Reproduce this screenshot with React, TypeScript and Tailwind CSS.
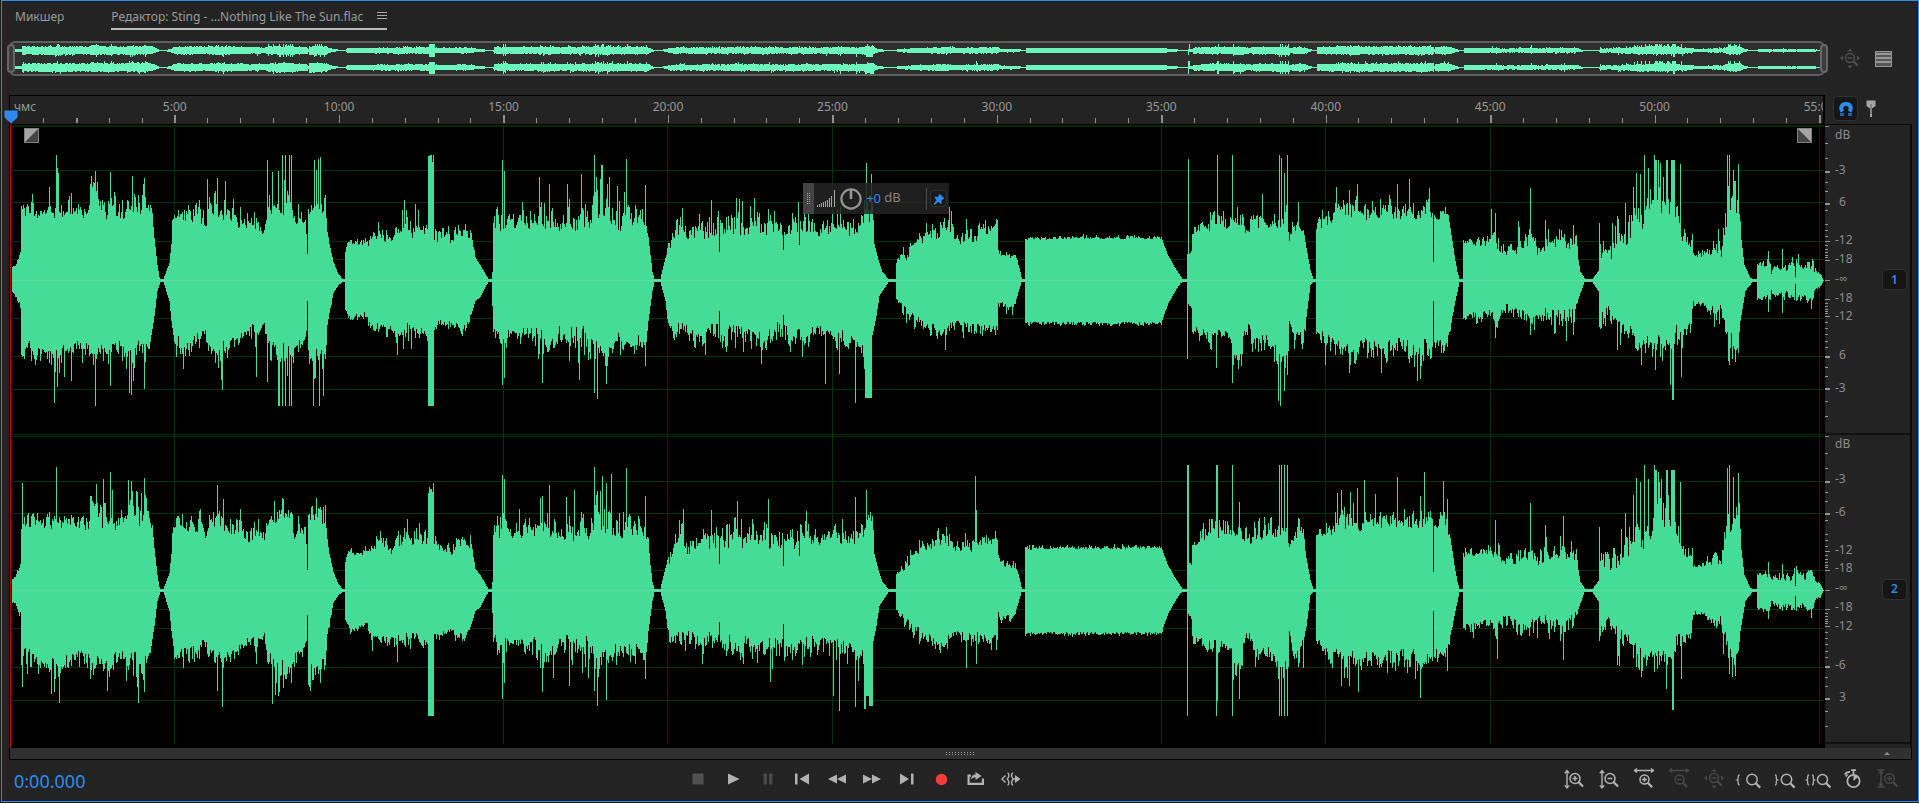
import React from 'react';

type Point = [number, number, number?];
type Spike = [number, number, number?];

/* Envelope points: x, steady level, peak level. */
const UPPER: Point[] = [
  [11, 9, 12], [14, 12, 16], [17, 16, 21], [20, 23, 30], [21, 62, 84], [26, 60, 76], [33, 62, 86], [45, 62, 72], [49, 62, 88],
  [54, 64, 88], [60, 60, 78], [71, 60, 87], [85, 60, 73], [89, 62, 80], [90, 86, 108], [97, 84, 106], [98, 62, 90], [106, 62, 96], [118, 58, 88],
  [124, 62, 80], [127, 72, 104], [135, 66, 98], [142, 65, 97], [147, 72, 96], [149, 68, 80], [152, 60, 70], [154, 42], [157, 15], [159, 3],
  [160, 1], [163, 1], [165, 6], [169, 17], [171, 36], [172, 56, 62], [176, 60, 80], [190, 60, 80], [200, 56, 82], [205, 50, 58],
  [208, 62, 86], [217, 64, 96], [225, 60, 90], [230, 55, 76], [240, 51, 78], [250, 49, 68], [257, 53, 70], [264, 44, 56], [266, 58, 74],
  [273, 66, 92], [282, 66, 92], [291, 66, 94], [293, 52, 70], [300, 58, 78], [305, 57, 72], [306, 46], [307, 26], [308, 66, 76], [314, 68, 90],
  [325, 66, 86], [327, 48, 52], [329, 36], [333, 18], [338, 6], [342, 1], [344, 1], [345, 28], [347, 35, 43], [368, 35, 44], [372, 40, 56],
  [378, 42, 64], [392, 36, 50], [398, 45, 60], [404, 46, 72], [412, 42, 60], [417, 45, 70], [427, 46, 60], [435, 40, 66], [437, 38, 50],
  [445, 38, 55], [452, 35, 46], [458, 44, 60], [470, 43, 57], [472, 38, 42], [475, 20, 24], [480, 15], [485, 6], [488, 1], [491, 1],
  [492, 8], [493, 50, 60], [497, 50, 92], [502, 52, 100], [506, 54, 72], [520, 52, 78], [535, 52, 68], [540, 52, 96], [550, 52, 90], [560, 49, 58],
  [567, 52, 92], [578, 49, 64], [582, 50, 96], [590, 52, 72], [594, 58, 104], [602, 62, 104], [612, 52, 94], [618, 50, 84], [627, 55, 90],
  [635, 58, 90], [640, 54, 74], [645, 48, 60], [648, 42, 50], [650, 25], [652, 8], [654, 1], [660, 1], [662, 10], [665, 22], [668, 25, 50],
  [675, 42, 62], [683, 45, 72], [688, 36, 52], [695, 42, 65], [708, 42, 65], [716, 43, 76], [727, 42, 72], [739, 44, 80], [745, 43, 62],
  [754, 48, 78], [765, 44, 74], [778, 42, 72], [785, 42, 60], [795, 43, 72], [803, 50, 80], [820, 42, 60], [832, 50, 76], [850, 45, 68],
  [860, 49, 68], [866, 54, 90], [872, 60, 90], [873, 60], [874, 36], [878, 20], [882, 8], [888, 1], [895, 1], [896, 15, 20], [902, 20, 33],
  [906, 18, 42], [912, 32, 40], [920, 37, 52], [930, 41, 55], [942, 44, 62], [950, 46, 68], [957, 36, 48], [967, 38, 58], [978, 40, 56],
  [984, 45, 64], [990, 45, 60], [997, 50, 62], [998, 25, 35], [1008, 22, 29], [1015, 22, 32], [1019, 12], [1021, 3], [1022, 1], [1024, 1], [1025, 40, 45],
  [1060, 41, 45], [1161, 41, 45], [1163, 37], [1167, 26], [1173, 15], [1180, 4], [1182, 1], [1186, 1], [1187, 26], [1191, 25, 30], [1192, 42, 50],
  [1200, 50, 66], [1210, 50, 76], [1230, 52, 70], [1240, 52, 75], [1247, 40, 68], [1252, 50, 68], [1262, 52, 80], [1270, 52, 78], [1278, 52, 68],
  [1287, 56, 72], [1289, 38, 44], [1292, 50, 60], [1298, 50, 76], [1303, 50, 62], [1306, 32], [1310, 10], [1313, 1], [1315, 1], [1316, 50, 62],
  [1323, 55, 75], [1332, 55, 68], [1336, 62, 88], [1356, 64, 88], [1360, 56, 72], [1368, 60, 82], [1378, 62, 88], [1390, 64, 85], [1400, 60, 78],
  [1410, 62, 86], [1425, 64, 86], [1432, 60, 84], [1433, 18], [1434, 60, 70], [1440, 60, 80], [1446, 60, 84], [1450, 52], [1454, 25],
  [1457, 8], [1459, 1], [1462, 1], [1463, 33, 42], [1480, 34, 46], [1492, 33, 48], [1497, 30, 52], [1505, 25, 32], [1507, 26, 44], [1515, 24, 36],
  [1518, 30, 52], [1530, 28, 54], [1538, 24, 34], [1545, 30, 58], [1552, 33, 48], [1560, 34, 54], [1572, 28, 44], [1576, 33, 50],
  [1578, 20], [1580, 8], [1585, 1], [1592, 1], [1595, 5], [1598, 9], [1599, 22, 54], [1607, 20, 52], [1615, 22, 48], [1620, 26, 62],
  [1628, 34, 74], [1634, 46, 84], [1645, 44, 98], [1655, 62, 116], [1665, 66, 116], [1676, 46, 88], [1682, 36, 55], [1692, 33, 60], [1693, 22, 28],
  [1705, 24, 32], [1715, 26, 46], [1722, 25, 58], [1727, 46, 96], [1731, 50, 88], [1739, 66, 90], [1741, 40], [1744, 15], [1750, 2], [1752, 1],
  [1756, 1], [1757, 14, 21], [1770, 12, 21], [1771, 6, 12], [1773, 12, 17], [1784, 9, 19], [1794, 10, 24], [1795, 3, 5], [1796, 14, 25], [1802, 10, 20],
  [1812, 12, 24], [1816, 6, 12], [1820, 6, 8], [1823, 0],
];

const LOWER: Point[] = [
  [11, 9, 12], [14, 11, 16], [20, 20, 28], [21, 55, 92], [30, 60, 88], [45, 70, 78], [54, 65, 108], [62, 64, 92], [78, 58, 75],
  [90, 65, 96], [100, 65, 85], [110, 65, 96], [120, 60, 72], [130, 60, 102], [145, 64, 102], [150, 60, 66], [154, 35], [157, 10], [160, 1],
  [163, 1], [169, 20], [171, 40], [174, 55, 70], [183, 58, 84], [197, 52, 72], [205, 45, 60], [208, 58, 74], [218, 62, 94], [228, 60, 78],
  [240, 52, 65], [253, 42, 60], [256, 50, 74], [264, 42], [267, 58, 92], [277, 66, 106], [292, 62, 96], [300, 60, 80], [306, 50], [307, 20],
  [308, 65, 96], [312, 72, 102], [325, 66, 88], [327, 38, 52], [333, 12], [338, 4], [342, 1], [344, 1], [345, 29], [350, 35, 45], [367, 30, 40],
  [372, 42, 58], [385, 45, 56], [398, 44, 68], [415, 42, 62], [427, 50, 62], [435, 40, 50], [450, 38, 48], [465, 44, 60], [472, 30], [475, 20],
  [480, 16], [485, 6], [488, 1], [491, 1], [493, 45, 60], [503, 45, 86], [510, 50, 58], [528, 45, 66], [540, 50, 94], [552, 52, 90], [560, 45, 58],
  [570, 46, 86], [582, 43, 86], [594, 56, 98], [604, 58, 94], [615, 55, 82], [625, 52, 76], [640, 55, 80], [646, 60, 72], [648, 40],
  [652, 10], [654, 1], [660, 1], [665, 20], [669, 45, 60], [690, 40, 68], [701, 44, 72], [716, 42, 60], [722, 46, 72], [735, 44, 74], [755, 50, 76],
  [770, 48, 74], [778, 42, 60], [785, 44, 70], [803, 48, 74], [825, 45, 62], [832, 49, 74], [850, 50, 68], [862, 60, 75], [864, 75, 90],
  [873, 50], [876, 35], [879, 15], [888, 1], [895, 1], [896, 18, 20], [905, 25, 40], [920, 38, 55], [930, 43, 60], [945, 46, 66], [957, 38, 44],
  [965, 43, 60], [980, 42, 60], [997, 44, 55], [998, 20, 30], [1013, 25, 35], [1019, 8], [1021, 1], [1024, 1], [1025, 41, 45], [1161, 41, 45],
  [1163, 36], [1168, 22], [1175, 10], [1180, 2], [1182, 1], [1186, 1], [1187, 22], [1191, 26, 30], [1192, 45, 60], [1205, 50, 66], [1216, 50, 72],
  [1225, 50, 60], [1231, 56, 66], [1232, 72, 96], [1242, 68, 92], [1243, 48, 58], [1249, 38, 50], [1252, 52, 72], [1270, 56, 76], [1278, 68, 90],
  [1288, 66, 88], [1289, 40], [1293, 50, 70], [1303, 50, 74], [1307, 28], [1310, 4], [1313, 1], [1315, 1], [1316, 48, 60], [1330, 56, 74],
  [1345, 62, 90], [1360, 58, 82], [1380, 62, 90], [1400, 58, 82], [1418, 60, 94], [1432, 60, 80], [1433, 20], [1434, 58, 72], [1447, 58, 72],
  [1454, 25], [1459, 1], [1462, 1], [1463, 33, 42], [1475, 32, 45], [1490, 28, 40], [1496, 35, 52], [1505, 22, 35], [1520, 30, 45], [1530, 28, 54],
  [1545, 25, 45], [1560, 30, 52], [1572, 25, 50], [1578, 18], [1584, 1], [1592, 1], [1598, 10], [1599, 30, 52], [1610, 26, 45], [1618, 36, 66],
  [1630, 46, 60], [1637, 56, 78], [1645, 54, 82], [1660, 55, 82], [1672, 62, 75], [1676, 45, 65], [1690, 40, 55], [1693, 20, 28], [1705, 22, 27],
  [1712, 26, 50], [1720, 25, 40], [1727, 50, 84], [1738, 60, 80], [1740, 40], [1745, 10], [1752, 1], [1756, 1], [1757, 16, 21], [1770, 14, 22],
  [1771, 8, 12], [1773, 12, 18], [1784, 10, 22], [1794, 14, 26], [1795, 3, 5], [1796, 15, 26], [1802, 12, 20], [1812, 18, 26], [1815, 7, 12], [1820, 4, 8], [1823, 0],
];

/* Single columns that rise over the envelope: x, level, width. */
const UP_1: Spike[] = [
  [49, 93], [56, 125], [57, 112], [58, 107], [71, 87], [95, 109], [110, 108], [132, 104], [143, 96], [207, 101], [217, 102], [225, 99],
  [267, 120], [272, 108], [278, 109], [282, 125], [285, 125], [289, 125], [291, 125], [314, 120], [316, 110], [318, 121], [320, 123],
  [307, 26, 1], [404, 80], [415, 76], [428, 124, 2], [430, 125, 2], [432, 118], [433, 125], [502, 120], [504, 109], [539, 103], [549, 96], [567, 96],
  [581, 106], [594, 125], [596, 103], [601, 115, 2], [609, 103], [617, 94], [626, 121], [645, 95, 1], [711, 80], [719, 28], [739, 81], [754, 82], [783, 30], [799, 35],
  [866, 117], [871, 106], [951, 69], [1188, 121], [1217, 125], [1232, 125], [1262, 86], [1279, 125], [1281, 122], [1284, 107], [1287, 125],
  [1298, 78], [1357, 96], [1397, 96], [1409, 101], [1429, 92], [1491, 71], [1495, 67], [1518, 59], [1530, 92], [1545, 60], [1573, 55], [1599, 57], [1617, 64],
  [1625, 77], [1633, 93], [1636, 107], [1640, 106], [1644, 125], [1648, 112], [1654, 125], [1655, 120, 2], [1658, 120], [1660, 117], [1663, 103],
  [1666, 120, 2], [1671, 120, 4], [1680, 116], [1727, 125], [1729, 125], [1733, 110], [1734, 99, 2], [1738, 116], [1768, 29], [1782, 31], [1792, 23], [1798, 26],
];
const DOWN_1: Spike[] = [
  [54, 122], [57, 106], [71, 100], [95, 125], [110, 105], [129, 112], [131, 114], [144, 108], [183, 88], [222, 109], [256, 96], [267, 101],
  [278, 125, 2], [282, 125], [285, 125], [289, 125], [291, 125], [313, 125], [319, 125], [323, 115], [397, 74], [403, 68], [428, 125, 6],
  [502, 104], [504, 97], [542, 102], [594, 112], [597, 118], [606, 103], [645, 85], [719, 30], [783, 34], [825, 103], [839, 93], [855, 122], [865, 117, 7],
  [945, 69], [1187, 78], [1216, 87], [1232, 102], [1241, 85], [1278, 120], [1280, 125], [1284, 110], [1287, 94], [1325, 84], [1349, 92],
  [1381, 92], [1417, 100], [1420, 98], [1495, 57], [1530, 54], [1573, 54], [1617, 69], [1641, 84], [1655, 89], [1670, 104], [1672, 119, 2], [1681, 96],
  [1729, 84], [1735, 81], [1768, 31], [1782, 32], [1811, 28],
];
const UP_2: Spike[] = [
  [22, 107], [56, 123], [103, 111], [110, 118], [112, 100], [128, 110], [137, 98], [144, 112], [217, 105], [223, 91], [282, 92], [311, 83],
  [307, 20], [428, 97], [429, 103], [430, 101, 2], [432, 98], [433, 107], [502, 115], [504, 111], [542, 94], [549, 105], [566, 93], [574, 100],
  [594, 123], [597, 99], [602, 114], [606, 107], [611, 116], [626, 122], [645, 94], [683, 81], [711, 80], [719, 26], [737, 89], [768, 91], [783, 24],
  [799, 34], [855, 93], [866, 100], [870, 78], [975, 114], [976, 80], [1187, 125, 2], [1216, 125, 2], [1232, 125], [1239, 88], [1279, 125],
  [1281, 125], [1284, 125], [1287, 125], [1337, 97], [1341, 100], [1350, 98], [1357, 102], [1364, 110], [1375, 96], [1397, 113], [1420, 94], [1424, 118],
  [1443, 109], [1447, 91], [1495, 70], [1530, 87], [1545, 65], [1563, 74], [1599, 63], [1625, 77], [1633, 95], [1636, 112], [1640, 108], [1644, 125],
  [1648, 111], [1654, 125], [1655, 120, 2], [1658, 118], [1666, 120, 2], [1671, 120, 4], [1680, 108], [1727, 122], [1729, 125], [1733, 113], [1738, 117], [1768, 28], [1782, 26],
];
const DOWN_2: Spike[] = [
  [22, 96], [54, 101], [59, 112], [107, 100], [138, 112], [217, 100], [222, 116], [272, 113], [275, 104], [279, 101], [310, 100], [320, 92],
  [307, 24], [372, 60], [397, 71], [428, 125, 6], [502, 108], [504, 92], [542, 101], [569, 95], [594, 100], [597, 115], [606, 109], [645, 88], [719, 31],
  [770, 91], [783, 33], [833, 105], [839, 120], [855, 116], [858, 90], [864, 118, 2], [866, 105, 3], [869, 115, 4], [966, 77], [976, 73], [1187, 125],
  [1216, 125], [1217, 110], [1232, 125], [1239, 108], [1279, 125], [1281, 125], [1284, 125], [1287, 125], [1303, 77], [1341, 95], [1349, 95], [1358, 101],
  [1420, 107], [1447, 80], [1497, 68], [1563, 69], [1599, 50], [1617, 74], [1641, 86], [1666, 98], [1672, 119, 2], [1681, 88], [1729, 83], [1735, 85], [1768, 28], [1811, 27],
];

const FIRST = 11;
const LAST = 1824;

function noise(n: number): number {
  let v = (n ^ 0x9e3779b9) | 0;
  v = Math.imul(v ^ (v >>> 16), 0x45d9f3b);
  v = Math.imul(v ^ (v >>> 16), 0x45d9f3b);
  return ((v ^ (v >>> 16)) >>> 0) / 4294967296;
}

function levels(env: Point[], spikes: Spike[], seed: number): number[] {
  const out: number[] = [];
  let i = 0;
  for (let x = FIRST; x < LAST; x++) {
    while (i < env.length - 2 && env[i + 1][0] <= x) i++;
    const a = env[i];
    const b = env[i + 1];
    const t = Math.min(1, Math.max(0, (x - a[0]) / (b[0] - a[0])));
    const low = a[1] + (b[1] - a[1]) * t;
    const aHigh = a[2] ?? a[1];
    const bHigh = b[2] ?? b[1];
    const high = aHigh + (bHigh - aHigh) * t;
    /* Paired columns give the body its grain; one in ten jumps to its peak. */
    const pair = noise(Math.floor(x / 2) * 13 + seed);
    const fast = noise(x * 7 + seed);
    const jump = noise(x * 31 + seed * 3) > 0.88 ? 0.45 : 0;
    const share = -0.08 + 0.5 * pair * pair + 0.6 * Math.pow(fast, 1.5) + jump;
    out.push(Math.max(0, Math.min(122, Math.round(low + (high - low) * share))));
  }
  for (const [x, level, width = 1] of spikes) {
    for (let k = 0; k < width; k++) out[x + k - FIRST] = level;
  }
  return out;
}

function shape(up: number[], down: number[], axis: number, scale: number, left: number): string {
  let d = `M${left} ${axis}`;
  up.forEach((h, i) => {
    d += `V${axis - Math.round(h * scale)}H${left + i + 1}`;
  });
  for (let i = down.length - 1; i >= 0; i--) {
    d += `V${axis + 1 + Math.round(down[i] * scale)}H${left + i}`;
  }
  return d + 'Z';
}

const CH1 = { up: levels(UPPER, UP_1, 11), down: levels(LOWER, DOWN_1, 5003) };
const CH2 = { up: levels(UPPER, UP_2, 90001), down: levels(LOWER, DOWN_2, 70001) };

const GRID_X = [174, 503, 667, 832, 1161, 1325, 1490, 1819];
const GRID_Y = [170, 202, 241, 259, 318, 356, 389, 434, 436, 481, 513, 570, 609, 628, 667, 700];

function Waveform() {
  return (
    <svg className="block h-full w-full" viewBox="10 124 1815 624" preserveAspectRatio="none" shapeRendering="crispEdges" aria-hidden="true">
      <rect x="10" y="125" width="1814" height="2" fill="#012a03" />
      {GRID_Y.map((y) => (
        <rect key={y} x="11" y={y} width="1813" height="1" fill="#023503" />
      ))}
      {GRID_X.map((x) => (
        <rect key={x} x={x} y="126" width="1" height="618" fill="#023503" />
      ))}
      <path d={shape(CH1.up, CH1.down, 280, 1, 11)} fill="#45dc98" />
      <path d={shape(CH2.up, CH2.down, 590, 1, 11)} fill="#45dc98" />
      <rect x="11" y="280" width="1813" height="1" fill="#60dc9d" />
      <rect x="11" y="590" width="1813" height="1" fill="#60dc9d" />
      <rect x="10" y="124" width="1" height="624" fill="#c00808" />
      <rect x="11" y="124" width="1" height="620" fill="#3a0a05" />
    </svg>
  );
}

function Overview() {
  return (
    <div className="relative h-[35px] flex-1">
      <div className="mx-0 h-full rounded-md border-2 border-[#5e5e5e] bg-[#2f2f2f]">
        <svg className="block h-full w-full" viewBox="0 0 1812 31" preserveAspectRatio="none" shapeRendering="crispEdges" aria-hidden="true">
          <path d={shape(CH1.up, CH1.down, 7, 0.051, 1)} fill="#6df6bb" />
          <path d={shape(CH2.up, CH2.down, 24, 0.051, 1)} fill="#6df6bb" />
        </svg>
      </div>
      <button aria-label="Начало области просмотра" className="absolute -left-0.5 top-[3px] flex h-[29px] w-2 justify-center rounded border-2 border-[#666] bg-[#3c3c3c]" />
      <button aria-label="Конец области просмотра" className="absolute -right-[3px] top-[3px] flex h-[29px] w-2 justify-center rounded border-2 border-[#666] bg-[#3c3c3c]" />
    </div>
  );
}

const MINUTES = Array.from({ length: 56 }, (_, i) => i);
const TIMES = ['5:00', '10:00', '15:00', '20:00', '25:00', '30:00', '35:00', '40:00', '45:00', '50:00', '55:00'];

function Ruler() {
  return (
    <div className="relative h-[29px] border-l border-t border-r-2 border-black bg-[#232323]">
      <div className="flex h-[22px] items-center overflow-hidden whitespace-nowrap text-xs text-[#979797]">
        <span className="w-[4.55%] shrink-0 pl-1">чмс</span>
        {TIMES.map((t) => (
          <span key={t} className="w-[9.07%] shrink-0 text-center">{t}</span>
        ))}
      </div>
      <svg className="absolute bottom-px left-0 h-2 w-full" viewBox="10 0 1813 8" preserveAspectRatio="none" shapeRendering="crispEdges" aria-hidden="true">
        {MINUTES.map((m) => (
          <rect key={m} x={Math.round(10 + m * 32.89)} y={m % 5 === 0 ? 0 : 3} width={m % 10 === 5 || m === 2 ? 2 : 1} height="8" fill="#8e8e8e" />
        ))}
      </svg>
      <svg className="absolute -left-[6px] bottom-0 h-[14px] w-[14px]" viewBox="0 0 14 14" aria-hidden="true">
        <path d="M0.5 0.5h13v7L7 13.5 0.5 7.5z" fill="#2d8ceb" />
      </svg>
    </div>
  );
}

const DB_TICKS: [number, boolean][] = [
  [18, false], [33, false], [46, true], [57, false], [67, false], [79, true], [86, false], [100, false], [106, false], [112, false],
  [117, true], [121, false], [125, false], [128, false], [131, false], [133, false], [136, true], [156, true], [175, true], [179, false],
  [182, false], [185, false], [188, false], [190, false], [193, true], [199, false], [205, false], [211, false], [218, false], [224, false],
  [233, true], [244, false], [253, false], [265, true], [278, false], [293, false],
];

function DbScale({ id, labels }: { id: number; labels: string[] }) {
  return (
    <div className="flex min-h-0 border-b-2 border-[#111]">
      <svg className="block h-full w-1.5 shrink-0" viewBox="0 0 6 310" preserveAspectRatio="none" shapeRendering="crispEdges" aria-hidden="true">
        <rect width="4" height="1" y="1" fill="#8a8a8a" />
        {DB_TICKS.map(([y, major]) => (
          <rect key={y} x="0" y={y} width={major ? 5 : 3} height={major && (y === 46 || y === 79 || y === 233 || y === 265) ? 2 : 1} fill="#949494" />
        ))}
      </svg>
      <div className="grid flex-1 grid-rows-[10fr_35fr_33fr_38fr_19fr_20fr_19fr_19fr_39fr_33fr_45fr] pl-1 text-xs text-[#8c8c8c]">
        {labels.map((l, i) => (
          <div key={i} className="flex items-end">
            <span className={l.length === 1 ? 'pl-1 leading-[0]' : 'leading-[0]'}>{l}</span>
          </div>
        ))}
      </div>
      <div className="flex items-center pr-[3px] pt-0.5">
        <button aria-label={`Канал ${id}`} className="h-[21px] w-[25px] rounded-sm border border-[#303030] bg-[#151515] text-xs font-semibold leading-none text-[#2d8ceb]">{id}</button>
      </div>
    </div>
  );
}

const ON = '#b2b2b2';
const OFF = '#474747';

function Glass({ x, y, r = 5, sign = '' }: { x: number; y: number; r?: number; sign?: string }) {
  return (
    <g strokeWidth="1.5">
      <circle cx={x} cy={y} r={r} />
      {sign !== '' && <path d={`M${x - 2.5} ${y}h5`} />}
      {sign === '+' && <path d={`M${x} ${y - 2.5}v5`} />}
      <path d={`M${x + r * 0.72} ${y + r * 0.72}l4.4 4.4`} strokeWidth="2.2" />
    </g>
  );
}

function Icon({ color = ON, children }: { color?: string; children: React.ReactNode }) {
  return (
    <svg className="h-[26px] w-[26px] shrink-0" viewBox="0 0 26 26" fill="none" stroke={color} strokeWidth="1.5" aria-hidden="true">
      {children}
    </svg>
  );
}

const UpDown = (
  <path d="M6 5v16M3.8 7.2L6 4.6l2.2 2.6M3.8 19.4L6 22l2.2-2.6" strokeWidth="1.4" />
);
const Across = (
  <path d="M4 4.500h18M6 2.500L3.600 4.500l2.400 2M20 2.500l2.400 2-2.400 2" strokeWidth="1.5" />
);

function ZoomAll({ color }: { color: string }) {
  return (
    <Icon color={color}>
      <Glass x={13} y={12} r={4.5} sign="-" />
      <g fill={color} stroke="none">
        <path d="M13 2.5l2.6 3h-5.2zM13 22.5l2.6-3h-5.2zM3 12l3-2.6v5.2zM23 12l-3-2.6v5.2z" />
      </g>
    </Icon>
  );
}

const LEFT_BRACE = 'q-1.300 0-1.300 1.400v2q0 1.200-1.300 1.600 1.300 .4 1.300 1.600v2q0 1.400 1.300 1.400';
const RIGHT_BRACE = 'q1.300 0 1.300 1.400v2q0 1.200 1.300 1.600-1.300 .4-1.300 1.600v2q0 1.400-1.300 1.400';

const ZOOM_TOOLS: { label: string; icon: React.ReactNode }[] = [
  { label: 'Увеличить амплитуду', icon: <Icon>{UpDown}<Glass x={14} y={12.5} sign="+" /></Icon> },
  { label: 'Уменьшить амплитуду', icon: <Icon>{UpDown}<Glass x={14} y={12.5} sign="-" /></Icon> },
  { label: 'Увеличить время', icon: <Icon>{Across}<Glass x={13.5} y={13.5} r={4.5} sign="+" /></Icon> },
  { label: 'Уменьшить время', icon: <Icon color={OFF}>{Across}<Glass x={13.5} y={13.5} r={4.5} sign="-" /></Icon> },
  { label: 'Уменьшить полностью', icon: <ZoomAll color={OFF} /> },
  { label: 'Увеличить в начальной точке', icon: <Icon><path d={`M4.500 9${LEFT_BRACE}`} strokeWidth="1.300" /><Glass x={17} y={13.5} r={5.2} /></Icon> },
  { label: 'Увеличить в конечной точке', icon: <Icon><path d={`M5 9${RIGHT_BRACE}`} strokeWidth="1.300" /><Glass x={16.5} y={13.5} r={5.2} /></Icon> },
  { label: 'Масштабировать к выделению', icon: <Icon><path d={`M4 9${LEFT_BRACE}M7 9${RIGHT_BRACE}`} strokeWidth="1.300" /><Glass x={17.5} y={13.5} r={5} /></Icon> },
  {
    label: 'Масштаб по времени',
    icon: (
      <Icon>
        <circle cx="13.5" cy="15" r="6.2" strokeWidth="1.8" />
        <path d="M11 4.2h5M13.5 4.2v4M7.5 8.5l-1.8 2M4.5 8.500q2.500-3 5.500-2.400" strokeWidth="1.8" />
        <path d="M13.5 15V8.8a6.2 6.2 0 0 1 4.6 2.2z" fill={ON} stroke="none" />
      </Icon>
    ),
  },
  {
    label: 'Увеличить выбранную дорожку',
    icon: <Icon color={OFF}><path d="M2.5 4h7M2.5 21h7M6 5.5v14M4 7.500l2-2.4L8 7.500M4 17.500l2 2.4L8 17.500" /><Glass x={14.5} y={12.5} r={4.8} sign="+" /></Icon>,
  },
];

function Fill({ children, color = ON }: { children: React.ReactNode; color?: string }) {
  return (
    <svg className="h-5 w-5" viewBox="0 0 20 20" fill={color} aria-hidden="true">
      {children}
    </svg>
  );
}

const TRANSPORT: { label: string; icon: React.ReactNode }[] = [
  { label: 'Стоп', icon: <Fill color="#505050"><path d="M4.500 4.500h11v11h-11z" /></Fill> },
  { label: 'Воспроизвести', icon: <Fill><path d="M5 4.500l11.500 5.500L5 15.500z" /></Fill> },
  { label: 'Пауза', icon: <Fill color="#484848"><path d="M5.500 4.500h3.500v11H5.500zM11 4.500h3.500v11H11z" /></Fill> },
  { label: 'К предыдущему', icon: <Fill><path d="M3 4.500h2.500v11H3zM17 4.500v11L7.500 10z" /></Fill> },
  { label: 'Назад', icon: <Fill><path d="M10 5.500v9L1 10zM19 5.500v9L10 10z" /></Fill> },
  { label: 'Вперед', icon: <Fill><path d="M1 5.500v9l9-4.500zM10 5.500v9l9-4.500z" /></Fill> },
  { label: 'К следующему', icon: <Fill><path d="M3 4.500v11l9-5.500zM14 4.500h2.500v11H14z" /></Fill> },
  { label: 'Запись', icon: <Fill color="#f43b3b"><circle cx="9.500" cy="10.500" r="5.800" /></Fill> },
  {
    label: 'Цикл',
    icon: (
      <Fill>
        <path d="M1.500 5.500H5v2.300H3.700v6h12.100V9.500H18v6.600H1.500z" />
        <path d="M5 10.500q.5-5 4.500-5V3l6 4-6 4V8.200q-2.500 0-4.500 2.300z" />
      </Fill>
    ),
  },
  {
    label: 'Пропустить выделение',
    icon: (
      <svg className="h-5 w-5" viewBox="0 0 20 20" fill="none" stroke={ON} strokeWidth="1.400" aria-hidden="true">
        <path d="M4.500 6.500L1 10l3.500 3.500M6.500 4q1.300 .2 1.300 1.800v1.700L6.300 10l1.500 2.500v1.700q0 1.600-1.300 1.800M12 4q-1.300 .2-1.300 1.800v1.700L12.200 10l-1.500 2.500v1.700q0 1.600 1.300 1.800M12.500 10H16" />
        <path d="M14 6l5.500 4-5.500 4z" fill={ON} stroke="none" />
      </svg>
    ),
  },
];

function Dots({ cols, rows, pitch = 2 }: { cols: number; rows: number; pitch?: number }) {
  const cells: React.ReactNode[] = [];
  for (let r = 0; r < rows; r++) {
    for (let c = 0; c < cols; c++) cells.push(<rect key={`${r}-${c}`} x={c * pitch} y={r * 2} width="1" height="1" />);
  }
  return (
    <svg width={cols * pitch} height={rows * 2 - 1} fill="#a0a0a0" shapeRendering="crispEdges" aria-hidden="true">
      {cells}
    </svg>
  );
}

function GainHud() {
  return (
    <div className="absolute left-[43.7%] top-[59px] flex h-[31px] w-[146px] items-center bg-[#232323]/85">
      <div className="flex h-full w-[11px] items-center justify-center bg-[#444]">
        <Dots cols={2} rows={6} />
      </div>
      <svg className="ml-[3px] h-[18px] w-[18px]" viewBox="0 0 18 18" fill="#a6a6a6" shapeRendering="crispEdges" aria-hidden="true">
        <path d="M0 15h1v2H0zM2 14h1v3H2zM4 13h1v4H4zM6 12h1v5H6zM8 11h1v6H8zM10 10h1v7h-1zM12 8h1v9h-1zM14 6h1v11h-1zM17 0h1v17h-1z" />
      </svg>
      <svg className="ml-[5px] h-[22px] w-[22px]" viewBox="0 0 22 22" fill="none" stroke="#949494" strokeWidth="2.200" aria-hidden="true">
        <circle cx="11" cy="11" r="9.600" />
        <path d="M11 2v9" strokeWidth="2.600" />
      </svg>
      <label className="ml-1 flex items-center gap-0.5 pb-0.5 text-[13px] leading-none text-[#8b8178]">
        <input aria-label="Громкость" type="text" defaultValue="+0" className="w-4 bg-transparent p-0 text-[13px] leading-none text-[#2d8ceb] outline-none" />
        <span>dB</span>
      </label>
      <div className="ml-auto mr-[3px] h-[22px] w-px bg-[#4c4c4c]" />
      <button aria-label="Закрепить" className="mr-0.5 flex h-[17px] w-[17px] items-center justify-center rounded-sm border border-[#303030] bg-[#191919]">
        <svg className="h-3 w-3" viewBox="0 0 12 12" fill="#2d8ceb" aria-hidden="true">
          <path d="M6.500 0.500l5 5-1.300.4-1.800 1.800.3 2.500-1 .8-2.300-2.300L1.600 12 0.500 11.200 3.700 7 1.500 4.600l.8-1L4.800 3.900 6.200 2z" />
        </svg>
      </button>
    </div>
  );
}

function FadeHandle({ flip = false }: { flip?: boolean }) {
  return (
    <svg className="h-[15px] w-[15px]" viewBox="0 0 15 15" aria-hidden="true">
      <rect x="0.500" y="0.500" width="14" height="14" fill="#444" stroke="#808080" />
      <path d={flip ? 'M1 1h13v13z' : 'M1 1h13L1 14z'} fill="#a5a5a5" />
    </svg>
  );
}

const LABELS_1 = ['dB', '-3', '6', '-12', '-18', '-∞', '-18', '-12', '6', '-3'];
const LABELS_2 = ['dB', '-3', '-6', '-12', '-18', '-∞', '-18', '-12', '-6', '3'];

export default function App() {
  return (
    <div className="h-screen min-h-[480px] bg-[#191919] pb-px pl-px font-['Noto_Sans','Open_Sans',sans-serif] text-[#9b9b9b]">
      <div className="flex h-full flex-col border border-[#2d8ceb] bg-[#232323]">
        <nav className="flex h-[29px] shrink-0 items-stretch pl-[13px] pt-1 text-xs">
          <button className="mr-[47px] pb-px">Микшер</button>
          <div className="flex items-center border-b-2 border-[#b9b9b9]">
            <button>Редактор: Sting - ...Nothing Like The Sun.flac</button>
            <button aria-label="Меню панели" className="ml-3.5">
              <svg className="h-[11px] w-[10px]" viewBox="0 0 10 11" fill="#a8a8a8" shapeRendering="crispEdges" aria-hidden="true">
                <path d="M0 1h10v1H0zM0 4h10v1H0zM0 7h10v1H0z" />
              </svg>
            </button>
          </div>
        </nav>

        <div className="mt-[11px] flex shrink-0 items-center pl-[7px] pr-[6px]">
          <Overview />
          <div className="flex w-[87px] items-center pl-3">
            <button aria-label="Показать всё"><ZoomAll color="#4e4e4e" /></button>
            <button aria-label="Список" className="ml-3">
              <svg className="h-4 w-[17px]" viewBox="0 0 17 16" shapeRendering="crispEdges" aria-hidden="true">
                <rect width="17" height="16" rx="1" fill="#969696" />
                <path d="M1 1h15v1H1zM1 4h15v2H1zM1 8h15v2H1zM1 12h15v3H1z" fill="#565656" />
              </svg>
            </button>
          </div>
        </div>

        <div className="mt-[19px] grid min-h-0 flex-1 grid-cols-[1fr_87px] grid-rows-[29px_1fr_12px] pl-[7px] pr-[6px]">
          <Ruler />
          <div className="flex items-start gap-2 pl-2 pt-px">
            <button aria-label="Привязка" className="flex h-[25px] w-[25px] items-center justify-center rounded-sm border border-[#303030] bg-[#161616]">
              <svg className="h-4 w-4" viewBox="0 0 16 16" fill="none" stroke="#2d8ceb" strokeWidth="4" aria-hidden="true">
                <path d="M4.500 10.500C1.700 6.500 4 3 8 3s6.300 3.500 3.500 7.500" />
                <path d="M2 13.500h4M10 13.500h4" strokeWidth="3" stroke="#1d62ad" />
              </svg>
            </button>
            <button aria-label="Маркер" className="mt-1">
              <svg className="h-[18px] w-[10px]" viewBox="0 0 10 18" fill="#a5a5a5" aria-hidden="true">
                <path d="M0.500 0.500h9V6L6 8.500V17H4V8.500L0.500 6z" />
                <path d="M4.700 4h.7v10h-.7z" fill="#444" />
              </svg>
            </button>
          </div>

          <div className="relative min-h-0 border-l border-black bg-black">
            <Waveform />
            <div className="absolute left-[14px] top-1"><FadeHandle /></div>
            <div className="absolute right-[13px] top-1"><FadeHandle flip /></div>
            <GainHud />
          </div>
          <div className="grid min-h-0 grid-rows-[310fr_310fr_4fr] border-r-2 border-t border-[#0c0c0c]">
            <DbScale id={1} labels={LABELS_1} />
            <DbScale id={2} labels={LABELS_2} />
            <div />
          </div>

          <div className="col-span-2 grid grid-cols-[1fr_30px_1fr] items-center border-b border-l border-r border-black bg-[#303030]">
            <span />
            <div className="flex justify-center"><Dots cols={10} rows={2} pitch={3} /></div>
            <button aria-label="Развернуть" className="justify-self-end pr-[21px]">
              <svg className="h-[3px] w-[6px]" viewBox="0 0 6 3" fill="#8b8b8b" aria-hidden="true"><path d="M0 3L3 0l3 3z" /></svg>
            </button>
          </div>
        </div>

        <footer className="grid h-[41px] shrink-0 grid-cols-[678fr_348px_528fr_348px] items-center pb-[3px] pr-[13px]">
          <output aria-label="Текущее время" className="pl-3 pt-1 text-lg leading-none text-[#2d8ceb]">0:00.000</output>
          <div className="flex">
            {TRANSPORT.map((t) => (
              <button key={t.label} aria-label={t.label} className="flex flex-1 justify-center">{t.icon}</button>
            ))}
          </div>
          <span />
          <div className="flex">
            {ZOOM_TOOLS.map((t) => (
              <button key={t.label} aria-label={t.label} className="flex flex-1 justify-center">{t.icon}</button>
            ))}
          </div>
        </footer>
      </div>
    </div>
  );
}
